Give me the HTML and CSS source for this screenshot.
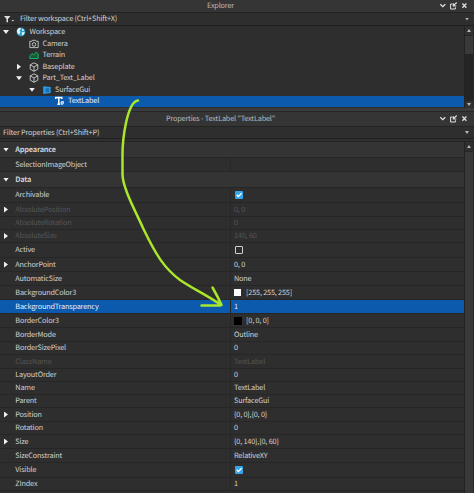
FILE: index.html
```
<!DOCTYPE html>
<html lang="en">
<head>
<meta charset="utf-8">
<title>Explorer</title>
<link rel="stylesheet" href="styles.css">
</head>
<body>
<svg class="defs" width="0" height="0">
  <symbol id="controls" viewBox="0 0 30 12"><g fill="none" stroke="#e2e2e2" stroke-width="1.3"><path d="M3.3 4.3 5.8 6.7 8.3 4.3M25.4 3.5 29.4 7.7M29.4 3.5 25.4 7.7"/><path d="M15.5 4H13.6V9H18.4V7.3" stroke-width="1"/><path d="M19.7 2.5 16.5 5.7M16.3 3.3V6H19.3" stroke-width="1.1"/></g></symbol>
  <symbol id="cube" viewBox="0 0 10 10"><path d="M5 .8 8.8 2.8V7.2L5 9.3 1.2 7.2V2.8ZM1.2 2.8 5 5 8.8 2.8M5 5V9.3" fill="none" stroke="#d8d8d8" stroke-width=".85"/></symbol>
  <symbol id="check" viewBox="0 0 8 8"><rect width="8" height="8" rx="1" fill="#35a5e8"/><path d="M1.7 3.8 3.4 5.5 6.6 2.3" fill="none" stroke="#fff" stroke-width="1.3"/></symbol>
</svg>
<section class="panel explorer">
  <header class="title"><span>Explorer</span><svg class="controls"><use href="#controls"/></svg></header>
  <div class="filter">
    <svg class="funnel" viewBox="0 0 12 8"><path d="M0 1H6.4L4 4V7.2H2.5V4Z" fill="#ddd"/><path d="M7.5 5H10.3L8.9 6.5Z" fill="#ccc"/></svg>
    <span>Filter workspace (Ctrl+Shift+X)</span><i class="drop"></i>
  </div>
  <div class="view">
    <div class="tree">
      <div class="node"><i class="open"></i><svg class="icon" viewBox="0 0 10 10"><circle cx="5" cy="5" r="4.4" fill="#2e9acb"/><path d="M1 3Q2 .8 4.3.8L5 2 3.5 3.8 4.5 5 3 7.8Q1 6.4.8 4ZM6 2 8.3 2.8 7.7 4 6 3.7ZM5.7 5.2 8.8 5 7.8 7.8 6 8.5Z" fill="#d8f4f6"/></svg><span>Workspace</span></div>
      <div class="node l1"><i></i><svg class="icon" viewBox="0 0 10 10"><path d="M.8 2.3H2.8L3.4 1.3H6.6L7.2 2.3H9.2V8.6H.8Z" fill="none" stroke="#ccc" stroke-width=".9"/><circle cx="5" cy="5.4" r="1.8" fill="none" stroke="#ccc" stroke-width=".9"/></svg><span>Camera</span></div>
      <div class="node l1"><i></i><svg class="icon" viewBox="0 0 10 10"><path d="M.8 8.5V6L3.1 3.5 4.8 5 7.3 2 9.2 3.8V8.5Z" fill="#185b3a" stroke="#19ad68" stroke-width="1"/></svg><span>Terrain</span></div>
      <div class="node l1"><i class="closed"></i><svg class="icon"><use href="#cube"/></svg><span>Baseplate</span></div>
      <div class="node l1"><i class="open"></i><svg class="icon"><use href="#cube"/></svg><span>Part_Text_Label</span></div>
      <div class="node l2"><i class="open"></i><svg class="icon" viewBox="0 0 10 10"><path d="M1.2 1.3 8.7 2V8.1L1.2 9Z" fill="#2d9be5"/><path d="M3.5 3.2H7.3V7.2H3.5Z" fill="#1673b8"/></svg><span>SurfaceGui</span></div>
      <div class="node l3 selected"><i></i><svg class="icon" viewBox="0 0 10 10"><path d="M.7 3V1.6H6.8V3M3.8 1.7V8.3M2.4 8.3H5.2" fill="none" stroke="#fff" stroke-width="1.5"/><path d="M6 5.8 8.4 5.4V7.6L7.2 8.8 6 7.8Z" fill="#9fc3ea" stroke="#fff" stroke-width=".7"/></svg><span>TextLabel</span></div>
    </div>
    <div class="scroll"><b class="up"></b><div class="thumb"></div><b class="down"></b></div>
  </div>
</section>
<section class="panel properties">
  <header class="title"><span>Properties - TextLabel "TextLabel"</span><svg class="controls"><use href="#controls"/></svg></header>
  <div class="filter"><span>Filter Properties (Ctrl+Shift+P)</span><i class="drop"></i></div>
  <div class="view">
    <div class="grid">
      <div class="row group"><i class="open"></i><span>Appearance</span></div>
      <div class="row"><i></i><span>SelectionImageObject</span><em></em></div>
      <div class="row group"><i class="open"></i><span>Data</span></div>
      <div class="row"><i></i><span>Archivable</span><em><svg class="check"><use href="#check"/></svg></em></div>
      <div class="row dim"><i class="closed"></i><span>AbsolutePosition</span><em>0, 0</em></div>
      <div class="row dim"><i></i><span>AbsoluteRotation</span><em>0</em></div>
      <div class="row dim"><i class="closed"></i><span>AbsoluteSize</span><em>140, 60</em></div>
      <div class="row"><i></i><span>Active</span><em><b class="box"></b></em></div>
      <div class="row"><i class="closed"></i><span>AnchorPoint</span><em>0, 0</em></div>
      <div class="row"><i></i><span>AutomaticSize</span><em>None</em></div>
      <div class="row"><i></i><span>BackgroundColor3</span><em><b class="swatch white"></b>[255, 255, 255]</em></div>
      <div class="row selected"><i></i><span>BackgroundTransparency</span><em>1</em></div>
      <div class="row"><i></i><span>BorderColor3</span><em><b class="swatch"></b>[0, 0, 0]</em></div>
      <div class="row"><i></i><span>BorderMode</span><em>Outline</em></div>
      <div class="row"><i></i><span>BorderSizePixel</span><em>0</em></div>
      <div class="row dim"><i></i><span>ClassName</span><em>TextLabel</em></div>
      <div class="row"><i></i><span>LayoutOrder</span><em>0</em></div>
      <div class="row"><i></i><span>Name</span><em>TextLabel</em></div>
      <div class="row"><i></i><span>Parent</span><em>SurfaceGui</em></div>
      <div class="row"><i class="closed"></i><span>Position</span><em>{0, 0},{0, 0}</em></div>
      <div class="row"><i></i><span>Rotation</span><em>0</em></div>
      <div class="row"><i class="closed"></i><span>Size</span><em>{0, 140},{0, 60}</em></div>
      <div class="row"><i></i><span>SizeConstraint</span><em>RelativeXY</em></div>
      <div class="row"><i></i><span>Visible</span><em><svg class="check"><use href="#check"/></svg></em></div>
      <div class="row"><i></i><span>ZIndex</span><em>1</em></div>
    </div>
    <div class="scroll"><b class="up"></b><div class="thumb"></div></div>
  </div>
</section>
<svg class="arrow" viewBox="0 0 474 493"><path d="M138 100.5C127 102 122.5 139 122.5 155V174C122.5 188 136 212 143 228C156 255 164 268 180 280C195 290 210 297 221 305M212.5 287.5Q218 297 221.5 305M201.5 305.5H217Q220 305.5 221.5 305" fill="none" stroke="#aae62b" stroke-width="2.5" stroke-linecap="round" stroke-linejoin="round"/></svg>
</body>
</html>
```
FILE: styles.css
```
* { box-sizing: border-box; }
body {
  margin: 0;
  width: 474px;
  height: 493px;
  overflow: hidden;
  background: #292929;
  color: #d0d0d0;
  font: 7.3px/12px "Noto Sans CJK SC", "Noto Sans", sans-serif;
  letter-spacing: -.18px;
  text-rendering: geometricPrecision;
}
.defs { position: absolute; }
.panel { display: flex; flex-direction: column; }
.explorer { height: 108px; }
.properties { height: 385px; border-top: 3px solid #3b3b3b; }
.title {
  display: grid;
  grid-template-columns: 34px 1fr 34px;
  align-items: center;
  height: 13px;
  padding-right: 3px;
  background: #353535;
  color: #bababa;
  border-bottom: 1px solid #232323;
}
.title span { grid-column: 2; margin-left: -28px; padding-right: 2px; text-align: center; }
.controls { width: 30px; height: 12px; }
.properties .title { height: 16px; border-top: 1px solid #272727; }
.filter {
  display: flex;
  align-items: center;
  height: 13px;
  padding: 0 5px 0 4px;
  background: #2e2e2e;
  border-bottom: 1px solid #1f1f1f;
}
.properties .filter { padding-left: 3px; height: 12px; }
.funnel { width: 12px; height: 8px; margin-right: 4px; }
i { flex: none; width: 6px; height: 6px; }
.open::before, .closed::before, .drop::before, .up::before, .down::before {
  content: "";
  display: block;
  width: 6px;
  height: 4px;
  background: #f0f0f0;
  clip-path: polygon(0 0, 100% 0, 50% 100%);
}
.open::before { margin-top: 1px; }
.closed::before { width: 4px; height: 6px; margin-left: 1px; clip-path: polygon(0 0, 100% 50%, 0 100%); }
.drop { margin-left: auto; width: 4px; height: 3px; }
.drop::before, .up::before, .down::before { width: 4px; height: 3px; background: #b5b5b5; }
.up::before { clip-path: polygon(50% 0, 100% 100%, 0 100%); }
.view { display: flex; flex: 1; min-height: 0; }
.tree { flex: 1; background: #2e2e2e; }
.node { display: flex; align-items: center; height: 11.5px; padding-left: 3px; white-space: nowrap; }
.node:first-child { height: 12px; }
.l1 { padding-left: 16px; }
.l2 { padding-left: 29px; }
.l3 { padding-left: 42px; }
.icon { flex: none; width: 10px; height: 10px; margin: 0 3.5px 0 7px; }
.l2 .icon, .l3 .icon { margin-right: 3px; }
.selected { background: #0b5aae; color: #e6eef7; }
.scroll {
  display: flex;
  flex-direction: column;
  width: 9px;
  margin-right: 1px;
  background: #242424;
  border-left: 1px solid #222;
}
.up, .down { display: grid; place-items: center; height: 9px; background: #303030; }
.down { margin-top: auto; height: 7px; }
.thumb { height: 19px; background: #393939; border-top: 1px solid #252525; }
.properties .view { margin-top: 2px; border-top: 1px solid #222; box-shadow: 0 -2px #303030; }
.properties .thumb { flex: 1; }
.grid {
  flex: 1;
  display: grid;
  grid-template-rows: 16px 14px 16px 15px 14px 13px 13px 15px 14px 14px 14px 14px 14px 14px 13px 14px 13px 13px 13px 14px 13px 14px 14px 15px 13px;
  background: #2e2e2e;
}
.row {
  display: grid;
  grid-template-columns: 9px 218px 1fr;
  align-items: center;
  padding-left: 3px;
  border-bottom: 1px solid #262626;
  white-space: nowrap;
}
.row span { padding-left: 3.3px; }
.row em {
  display: flex;
  align-items: center;
  align-self: stretch;
  padding-left: 3px;
  border-left: 1px solid #272727;
  font-style: normal;
}
.group { background: #343434; font-weight: 700; }
.dim { color: #555; }
.check { width: 8px; height: 8px; margin-left: 1px; }
.box { width: 8px; height: 8px; margin-left: 1px; border: 1px solid #d0d0d0; border-radius: 1px; }
.swatch { width: 8px; height: 8px; margin-right: 4px; background: #000; }
.white { width: 7px; height: 7px; margin-right: 5px; background: #fff; }
.arrow { position: absolute; inset: 0; width: 474px; height: 493px; pointer-events: none; }
```
